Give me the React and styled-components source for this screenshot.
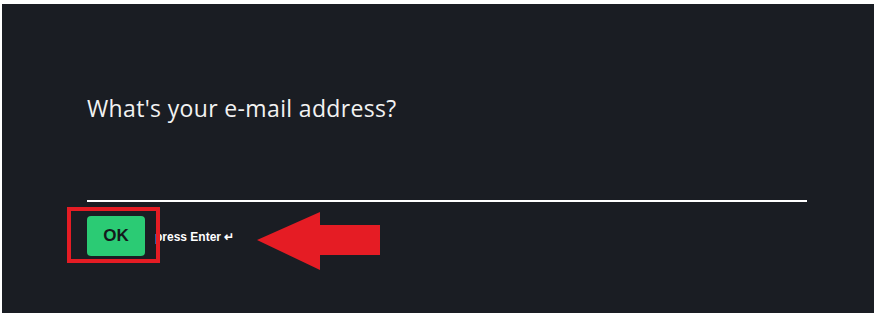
import React from "react"
import styled, { createGlobalStyle } from "styled-components"

const GlobalStyle = createGlobalStyle`
  html, body {
    margin: 0;
    padding: 0;
    background: #ffffff;
  }
`

const Frame = styled.div`
  width: 874px;
  height: 313px;
  padding: 4px 0 0 2px;
  box-sizing: border-box;
  background: #ffffff;
  overflow: hidden;
`

const Panel = styled.div`
  position: relative;
  height: 100%;
  background: #1a1d23;
  padding: 89px 0 0 85px;
  box-sizing: border-box;
`

const Question = styled.h1`
  margin: 0;
  font-family: "Open Sans", "Noto Sans", sans-serif;
  font-weight: 400;
  font-size: 23px;
  line-height: 30px;
  color: #f2f2f2;
  letter-spacing: 0.35px;
`

const Field = styled.div`
  width: 720px;
  height: 79px;
  border-bottom: 2px solid #ffffff;
  box-sizing: border-box;
`

const Actions = styled.div`
  display: flex;
  align-items: center;
  margin-top: 14px;
`

const OkButton = styled.button`
  width: 58px;
  height: 40px;
  border: none;
  border-radius: 4px;
  background: #2bcb74;
  color: #14181c;
  font-family: "Liberation Sans", Arial, sans-serif;
  font-weight: 700;
  font-size: 17px;
  padding: 0;
`

const Hint = styled.span`
  margin-left: 10px;
  margin-top: 2px;
  font-family: "Liberation Sans", Arial, sans-serif;
  font-weight: 700;
  font-size: 12px;
  color: #ffffff;
`

const Highlight = styled.div`
  position: absolute;
  left: 65px;
  top: 203px;
  width: 93px;
  height: 56px;
  border: 4px solid #e51c24;
  box-sizing: border-box;
`

const Arrow = styled.svg`
  position: absolute;
  left: 255px;
  top: 208px;
`

export default function App() {
  return (
    <>
      <GlobalStyle />
      <Frame>
        <Panel>
          <Question>What's your e-mail address?</Question>
          <Field />
          <Actions>
            <OkButton>OK</OkButton>
            <Hint>press Enter ↵</Hint>
          </Actions>
          <Highlight />
          <Arrow width="124" height="58" viewBox="0 0 124 58">
            <polygon
              points="0,28 63,0 63,13 123,13 123,43 63,43 63,58"
              fill="#e51c24"
            />
          </Arrow>
        </Panel>
      </Frame>
    </>
  )
}
